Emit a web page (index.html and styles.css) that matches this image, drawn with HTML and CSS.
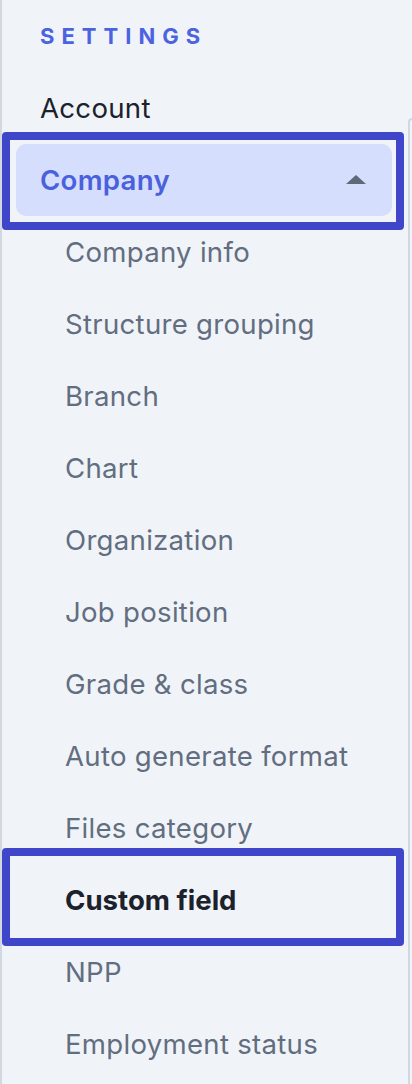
FILE: index.html
```html
<!DOCTYPE html>
<html>
<head>
  <link rel="stylesheet" href="styles.css">
</head>
<body>
  <div class="page">
    <nav class="sidebar">
      <h2 class="section-title">SETTINGS</h2>
      <a class="item">Account</a>

      <div class="mark mark-group">
        <div class="group-head">
          <span>Company</span>
          <svg class="caret" width="20" height="9" viewBox="0 0 20 9"><polygon points="0,9 10,0 20,9" fill="#5f6977"/></svg>
        </div>
      </div>

      <a class="sub">Company info</a>
      <a class="sub">Structure grouping</a>
      <a class="sub">Branch</a>
      <a class="sub">Chart</a>
      <a class="sub">Organization</a>
      <a class="sub">Job position</a>
      <a class="sub">Grade &amp; class</a>
      <a class="sub">Auto generate format</a>
      <a class="sub">Files category</a>

      <div class="mark mark-active">
        <a class="sub active">Custom field</a>
      </div>

      <a class="sub">NPP</a>
      <a class="sub">Employment status</a>
    </nav>
    <div class="rail"></div>
  </div>
</body>
</html>
```

FILE: styles.css
```css
body {
  margin: 0;
  background-color: #f0f4f9;
  font-family: Inter, "Noto Sans", sans-serif;
}
.page {
  display: flex;
  min-height: 100vh;
}
.sidebar {
  width: 402px;
  border-left: 2px solid #d2d8e0;
  display: flex;
  flex-direction: column;
}
.rail {
  flex: 1;
  margin-left: 4px;
  margin-top: 118px;
  border-left: 2px solid #d2d8e0;
  border-top: 2px solid #d2d8e0;
  border-top-left-radius: 10px;
}
.section-title {
  margin: 0;
  height: 72px;
  line-height: 72px;
  padding-left: 38px;
  font-size: 22px;
  font-weight: 700;
  letter-spacing: 0.32em;
  color: #4c63e0;
}
.item, .sub {
  display: block;
  height: 72px;
  line-height: 72px;
  font-size: 27.6px;
  letter-spacing: 0.01em;
  white-space: nowrap;
}
.item {
  padding-left: 38px;
  color: #1c212b;
}
.sub {
  padding-left: 63px;
  color: #626e80;
}

/* highlight boxes */
.mark {
  border: 8px solid #4046c9;
  border-radius: 4px;
}
.mark-group {
  margin: -12px 0 -14px;
  padding: 4px 4px 6px 6px;
}
.group-head {
  height: 72px;
  background-color: #d6defd;
  border-radius: 10px;
  display: flex;
  align-items: center;
  justify-content: space-between;
  padding: 0 26px 0 24px;
  font-size: 27.6px;
  letter-spacing: 0.01em;
  font-weight: 600;
  color: #4a61dd;
}
.caret {
  margin-top: -2px;
}
.mark-active {
  margin: -16px 0 -10px;
  padding: 8px 0 2px;
}
.mark-active .sub {
  padding-left: 55px;
}
.sub.active {
  font-weight: 700;
  letter-spacing: 0;
  color: #1c212b;
}
```
